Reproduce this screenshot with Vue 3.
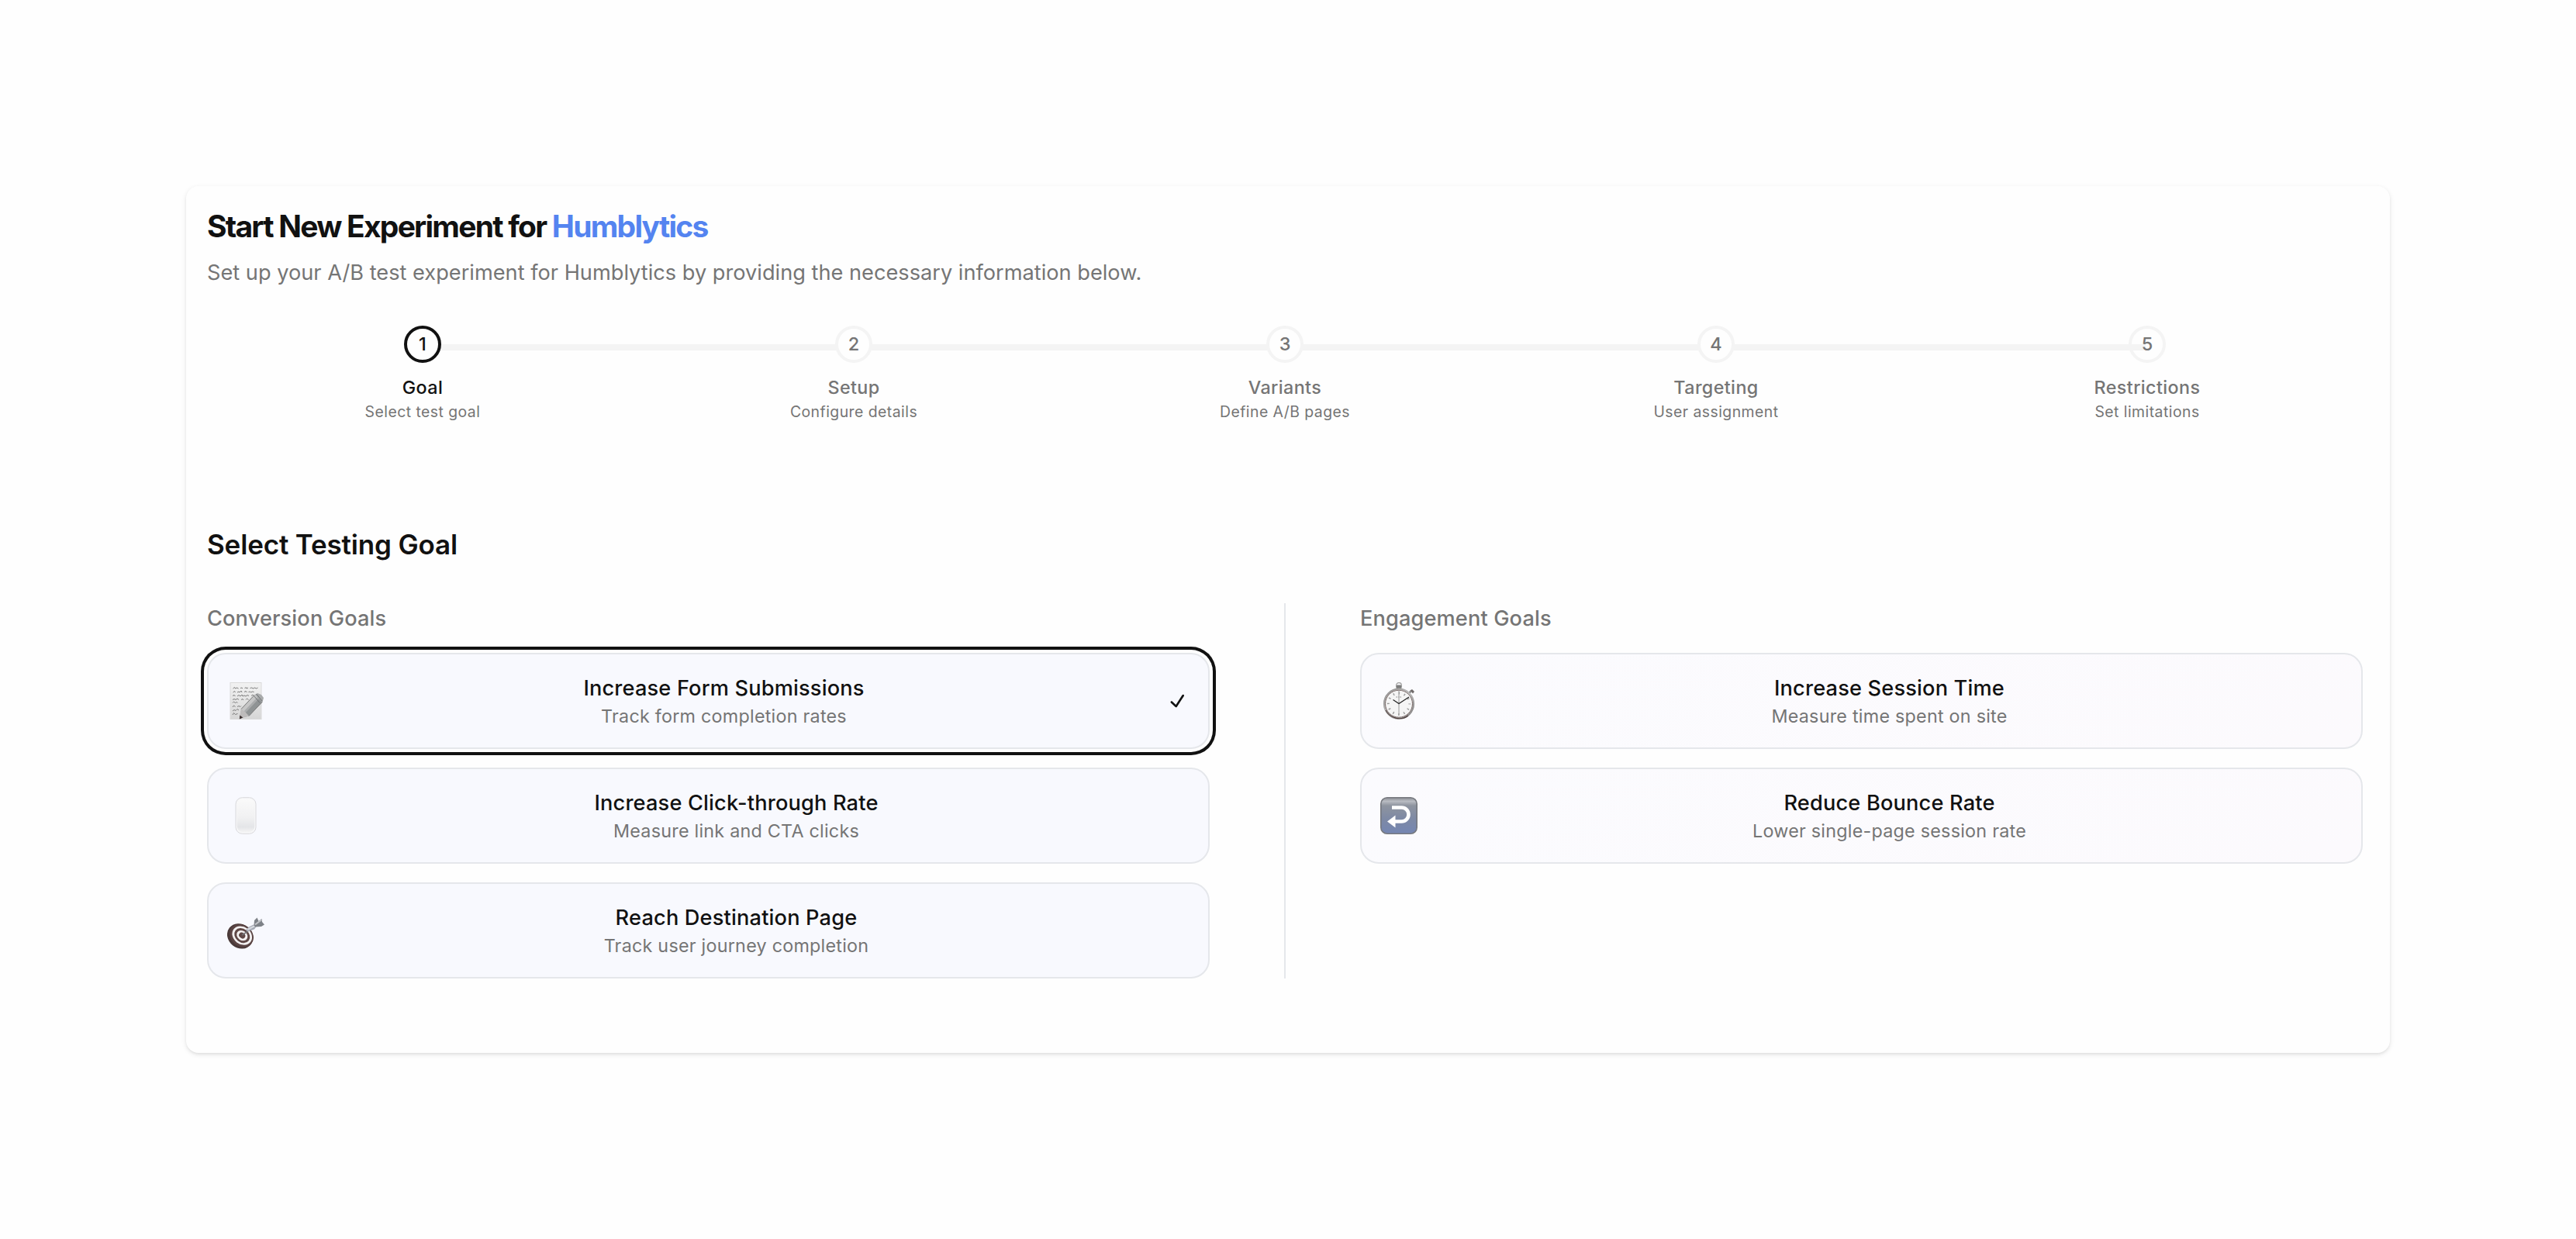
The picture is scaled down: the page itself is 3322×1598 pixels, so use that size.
<template>
  <div class="page">
    <div class="card">
      <h1 class="title">Start New Experiment for <span class="site-name">Humblytics</span></h1>
      <p class="subtitle">Set up your A/B test experiment for Humblytics by providing the necessary information below.</p>

      <!-- Stepper -->
      <div class="stepper">
        <div class="track"></div>
        <div
          v-for="step in steps"
          :key="step.id"
          :class="['step', { active: currentStep === step.id }]"
        >
          <div class="step-circle">{{ step.id }}</div>
          <div class="step-label">{{ step.label }}</div>
          <div class="step-hint">{{ step.hint }}</div>
        </div>
      </div>

      <h2 class="section-title">Select Testing Goal</h2>

      <div class="columns">
        <template v-for="(group, index) in groups" :key="group.key">
          <div v-if="index > 0" class="divider"></div>
          <div class="column">
            <h3 class="group-title">{{ group.title }}</h3>
            <button
              v-for="goal in group.goals"
              :key="goal.key"
              :class="['goal', group.key, { selected: selectedGoal === goal.key }]"
              @click="selectedGoal = goal.key"
            >
              <!-- memo -->
              <svg v-if="goal.key === 'form'" class="goal-icon" viewBox="0 0 48 48">
                <defs>
                  <linearGradient id="paper" x1="0" y1="0" x2="0" y2="1">
                    <stop offset="0" stop-color="#f2f2f2" />
                    <stop offset="1" stop-color="#d6d6d6" />
                  </linearGradient>
                </defs>
                <rect x="4" y="0.5" width="40" height="47" fill="url(#paper)" stroke="#dadada" />
                <g fill="none" stroke="#7c7c7c" stroke-width="1">
                  <path d="M7.5 8l2-1.5 1 1.5 2-1 2 1M17 7.5l2-.5 1 1M22.5 8l1.5-1.5 1 1.5 2-1M29.5 7.5l2-.5 2 1 2-1 2 1 2-1" />
                  <path d="M7.5 13l2-1.5 1 1.5M13 13l2-1 1 1 2-2 1 2M22.5 13l1-2 2 2M27.5 12.5l2-.5 1 1 2-1 2 .5" />
                  <path d="M7.5 18l1-2 2 2M13 18l2-1.500 2 1.500 2-2 1 2 2-1 2 1 2-1.500 2 1M31 17.500l2-1.500 1 1.500" />
                  <path d="M7 22.5l2-1 2 1 2-1.5 2 1.5M18 22.5l2-1 1 1.5M24 22.5l1.5-1.5 2 1.5" />
                  <path d="M7 26.5l1.5-1.5 2 1.5 2-1 1 1M7 32l1.5-2 2 1.5M13 31.5l2-1 2 1 1-1" />
                  <path d="M7 37l2-1.5 2 1 2-2 2 1.5M7 42l1.5-2.5 2 2 3-1" />
                </g>
                <path d="M18 34.5L35 16.5l4-2.5 5 2 3 4-1.5 5.5L28 43.5l-11 3-.5-3z" fill="#a9abac" />
                <path d="M18 34.5L36 16l3 3-18 19z" fill="#c6c6c6" />
                <path d="M23 40l18-19 4 4.5L28 43.5z" fill="#8f9394" />
                <path d="M18 34.5l-2 9.5.5 2.5L28 43.5l-5-5.5z" fill="#bdbbbb" />
                <path d="M16.3 42.5l-.5 5 4.500-2z" fill="#392e2e" />
                <path d="M34.5 17.5l7.5 9M37.5 15l7.5 9" stroke="#6f7274" stroke-width="1" />
                <path d="M18 34.5L35 16.5M45 25.5L28 43.5" stroke="#7d7d7d" stroke-width="1" />
              </svg>

              <!-- mouse -->
              <svg v-else-if="goal.key === 'click'" class="goal-icon" viewBox="0 0 48 48">
                <defs>
                  <linearGradient id="mouse" x1="0" y1="0" x2="0" y2="1">
                    <stop offset="0" stop-color="#fafafa" />
                    <stop offset="0.55" stop-color="#f1f1f2" />
                    <stop offset="0.85" stop-color="#e4e5e8" />
                    <stop offset="1" stop-color="#f4f4f4" />
                  </linearGradient>
                </defs>
                <rect x="11" y="0.7" width="26" height="46.6" rx="8.5" fill="#f7f7f8" stroke="#d9d9dc" stroke-width="1" />
                <rect x="12.7" y="2.2" width="22.6" height="43" rx="7.5" fill="url(#mouse)" />
              </svg>

              <!-- dartboard -->
              <svg v-else-if="goal.key === 'destination'" class="goal-icon" viewBox="0 0 48 48">
                <g transform="translate(0 7)">
                  <g transform="rotate(38 17 24)">
                    <ellipse cx="17" cy="24.5" rx="17.5" ry="15.3" fill="#4a3a39" />
                    <ellipse cx="18" cy="22.8" rx="16.5" ry="13.6" fill="#5b4544" />
                    <ellipse cx="18.5" cy="22.3" rx="13.7" ry="11.2" fill="#f3f1f1" />
                    <ellipse cx="18.5" cy="22.3" rx="10.8" ry="8.7" fill="#5f4846" />
                    <ellipse cx="18.5" cy="22.3" rx="7.6" ry="6.1" fill="#f3f1f1" />
                    <ellipse cx="18.5" cy="22.3" rx="4.3" ry="3.5" fill="#5f4846" />
                  </g>
                  <path d="M19 23l8-5" stroke="#6f6f72" stroke-width="1.5" />
                  <path d="M24 16.5l4-4 6-3 4 2-3 4-9 3z" fill="#a4a9b4" />
                  <path d="M26 16l10-5" stroke="#d6d9df" stroke-width="2" />
                  <path d="M34.5 10.5l.5-6.5 3.500-3.500 2 4.500 4-3 .5 4 3 3.500-4 2.500-8 .5z" fill="#7e8288" />
                  <path d="M36 9.5l8-6" stroke="#c3c5c9" stroke-width="2" />
                </g>
              </svg>

              <!-- stopwatch -->
              <svg v-else-if="goal.key === 'session'" class="goal-icon" viewBox="0 0 48 48">
                <defs>
                  <linearGradient id="rim" x1="0" y1="0" x2="1" y2="1">
                    <stop offset="0" stop-color="#8d8b8b" />
                    <stop offset="0.5" stop-color="#bdbdbd" />
                    <stop offset="1" stop-color="#7b7878" />
                  </linearGradient>
                </defs>
                <circle cx="24" cy="3.8" r="3.3" fill="none" stroke="#a3a3a3" stroke-width="1.3" />
                <rect x="20.5" y="3.5" width="7" height="5" rx="1.5" fill="#7d7d7d" />
                <path d="M36.5 14.5l3-3" stroke="#8a8a8a" stroke-width="2.5" />
                <path d="M38.5 10.5l2.5-1.5 3 3-2 2.5z" fill="#6f6a6a" />
                <circle cx="24" cy="27.7" r="19" fill="#f5f5f5" stroke="url(#rim)" stroke-width="2.2" />
                <circle cx="24" cy="27.7" r="17.5" fill="none" stroke="#6a5856" stroke-width="0.9" />
                <path d="M7 36a19.7 19.7 0 0 0 29 7" fill="none" stroke="#4f403f" stroke-width="1.1" />
                <circle cx="24" cy="27.7" r="13.7" fill="none" stroke="#9b9b9b" stroke-width="3" stroke-dasharray="1.4 5.773" stroke-dashoffset="0.7" />
                <path d="M24 10.5V42" stroke="#9a9a9a" stroke-width="1" />
                <path d="M20.5 19h7" stroke="#aaaaaa" stroke-width="1.5" stroke-dasharray="1.5 1" />
                <path d="M16.5 22.5l7.5 5 13-8.5" fill="none" stroke="#222222" stroke-width="1.2" />
              </svg>

              <!-- return arrow -->
              <svg v-else class="goal-icon" viewBox="0 0 48 48">
                <defs>
                  <linearGradient id="key-face" x1="0" y1="0" x2="0" y2="1">
                    <stop offset="0" stop-color="#8b8e95" />
                    <stop offset="0.1" stop-color="#b9bcc2" />
                    <stop offset="0.22" stop-color="#8e949f" />
                    <stop offset="0.6" stop-color="#7d89a5" />
                    <stop offset="1" stop-color="#7486b3" />
                  </linearGradient>
                </defs>
                <rect x="0.8" y="0.8" width="46.4" height="46.4" rx="8" fill="url(#key-face)" stroke="#76797f" stroke-width="1.6" />
                <path d="M15 13.5h12.5a9 9 0 0 1 0 18H18" fill="none" stroke="#ffffff" stroke-width="4.6" />
                <path d="M9 31.5L19.5 23.5v16z" fill="#ffffff" />
              </svg>

              <div class="goal-text">
                <div class="goal-name">{{ goal.name }}</div>
                <div class="goal-desc">{{ goal.desc }}</div>
              </div>

              <svg v-if="selectedGoal === goal.key" class="check" viewBox="0 0 15 15">
                <path
                  d="M11.4669 3.72684C11.7558 3.91574 11.8369 4.30308 11.648 4.59198L7.39799 11.092C7.29783 11.2452 7.13556 11.3467 6.95402 11.3699C6.77247 11.3931 6.58989 11.3355 6.45446 11.2124L3.70446 8.71241C3.44905 8.48022 3.43023 8.08494 3.66242 7.82953C3.89461 7.57412 4.28989 7.55529 4.5453 7.78749L6.75292 9.79441L10.6018 3.90792C10.7907 3.61902 11.178 3.53795 11.4669 3.72684Z"
                  fill="#111111"
                />
              </svg>
            </button>
          </div>
        </template>
      </div>
    </div>
  </div>
</template>

<script setup>
import { ref } from 'vue'

const currentStep = ref(1)
const selectedGoal = ref('form')

const steps = [
  { id: 1, label: 'Goal', hint: 'Select test goal' },
  { id: 2, label: 'Setup', hint: 'Configure details' },
  { id: 3, label: 'Variants', hint: 'Define A/B pages' },
  { id: 4, label: 'Targeting', hint: 'User assignment' },
  { id: 5, label: 'Restrictions', hint: 'Set limitations' }
]

const groups = [
  {
    key: 'conversion',
    title: 'Conversion Goals',
    goals: [
      { key: 'form', name: 'Increase Form Submissions', desc: 'Track form completion rates' },
      { key: 'click', name: 'Increase Click-through Rate', desc: 'Measure link and CTA clicks' },
      { key: 'destination', name: 'Reach Destination Page', desc: 'Track user journey completion' }
    ]
  },
  {
    key: 'engagement',
    title: 'Engagement Goals',
    goals: [
      { key: 'session', name: 'Increase Session Time', desc: 'Measure time spent on site' },
      { key: 'bounce', name: 'Reduce Bounce Rate', desc: 'Lower single-page session rate' }
    ]
  }
]
</script>

<style>
body {
  background: #fefefe;
}
</style>

<style scoped>
.page {
  box-sizing: border-box;
  height: 1598px;
  padding: 240px;
  font-family: Inter, "Liberation Sans", sans-serif;
  color: #111111;
}

.card {
  box-sizing: border-box;
  height: 1118px;
  padding: 32px 35px 96px 27px;
  background: #fefefe;
  border-radius: 16px;
  box-shadow: 0 2px 6px rgba(0, 0, 0, 0.1), 0 2px 4px -2px rgba(0, 0, 0, 0.1);
}

.title,
.subtitle,
.section-title,
.group-title {
  margin: 0;
  line-height: 40px;
}

.title {
  font-size: 39px;
  font-weight: 650;
  letter-spacing: -1.76px;
}

.site-name {
  color: #5484f0;
}

.subtitle {
  margin-top: 20px;
  font-size: 27.2px;
  color: #757575;
}

.stepper {
  position: relative;
  display: flex;
  margin-top: 48px;
}

.track {
  position: absolute;
  top: 24px;
  left: 10%;
  right: 10%;
  height: 8px;
  background: #f4f4f4;
}

.step {
  position: relative;
  flex: 1;
  display: flex;
  flex-direction: column;
  align-items: center;
  color: #757575;
}

.step-circle {
  box-sizing: border-box;
  width: 48px;
  height: 48px;
  border: 4px solid #f4f4f4;
  border-radius: 50%;
  background: #fefefe;
  font-size: 23.5px;
  font-weight: 500;
  line-height: 40px;
  text-align: center;
}

/* the track runs on into the last circle */
.step:last-child .step-circle {
  background: linear-gradient(#f4f4f4, #f4f4f4) 0 20px / 18px 8px no-repeat #fefefe;
}

.step-label {
  margin-top: 16px;
  font-size: 23.3px;
  font-weight: 500;
  line-height: 32px;
  letter-spacing: 0.4px;
}

.step-hint {
  font-size: 19.4px;
  line-height: 30px;
  letter-spacing: 0.46px;
}

.step.active .step-circle {
  border-color: #111111;
}

.step.active .step-circle,
.step.active .step-label {
  color: #111111;
}

.section-title {
  margin-top: 136px;
  font-size: 35px;
  font-weight: 600;
  letter-spacing: -0.16px;
}

.columns {
  display: flex;
  justify-content: space-between;
  margin-top: 56px;
}

.column {
  width: 1293px;
  display: flex;
  flex-direction: column;
  gap: 24px;
}

.divider {
  width: 2px;
  background: #e5e7eb;
}

.group-title {
  font-size: 27.2px;
  font-weight: 500;
  letter-spacing: 0.12px;
  color: #757575;
}

.goal {
  box-sizing: border-box;
  display: flex;
  align-items: center;
  width: 100%;
  height: 124px;
  padding: 0 24px;
  border: 2px solid #e5e7eb;
  border-radius: 24px;
  font-family: inherit;
  color: #111111;
  cursor: pointer;
}

.conversion {
  background: #f8f9fe;
}

.engagement {
  background: linear-gradient(135deg, #fbfbfe, #fcfafd);
}

.goal.selected {
  box-shadow: 0 0 0 4px #fefefe, 0 0 0 8px #111111;
}

.goal-icon {
  width: 48px;
  height: 48px;
  margin-right: 24px;
  flex-shrink: 0;
}

.goal-text {
  flex: 1;
  text-align: center;
}

.goal-name {
  font-size: 27.2px;
  font-weight: 500;
  line-height: 40px;
  letter-spacing: 0.17px;
}

.goal-desc {
  font-size: 23.3px;
  line-height: 32px;
  letter-spacing: 0.25px;
  color: #757575;
}

.check {
  width: 32px;
  height: 32px;
  flex-shrink: 0;
}
</style>
